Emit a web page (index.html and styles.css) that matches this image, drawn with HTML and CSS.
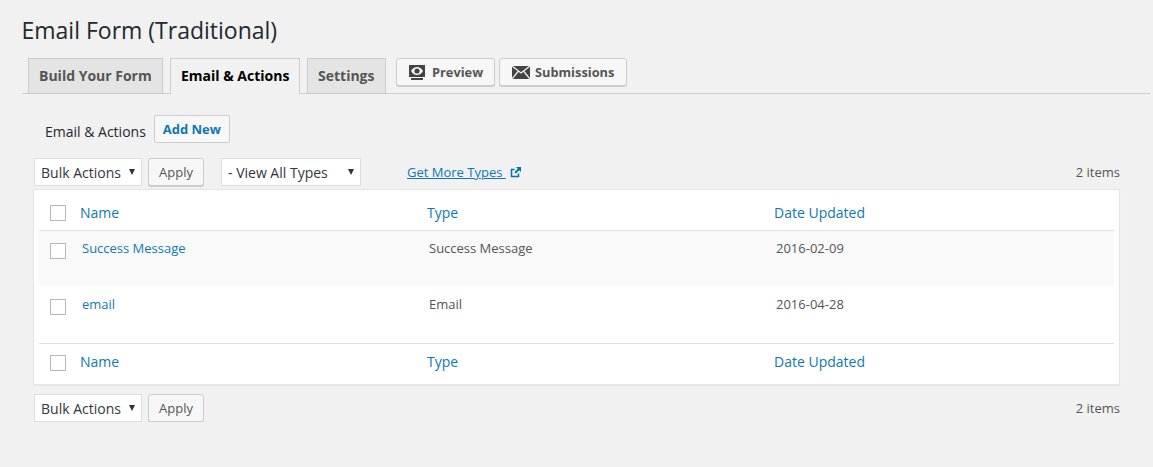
FILE: index.html
```html
<!DOCTYPE html>
<html lang="en">
<head>
  <meta charset="UTF-8" />
  <meta name="viewport" content="width=device-width, initial-scale=1.0"/>
  <title>Email Form (Traditional)</title>
  <link rel="stylesheet" href="styles.css">
</head>
<body>
  <h1>Email Form (Traditional)</h1>

  <div class="tabs">
    <a class="tab tab-build" href="#">Build Your Form</a>
    <a class="tab tab-active" href="#">Email &amp; Actions</a>
    <a class="tab tab-settings" href="#">Settings</a>
    <a class="tab-button btn-preview" href="#">
      <svg width="18" height="15" viewBox="0 0 18 15">
        <path fill="#444" d="M1 0h16v12H1z"/>
        <path fill="#444" d="M3 13h12v2H3z"/>
        <path fill="#fff" d="M3 6c2-3 4-4 6-4s4 1 6 4c-2 3-4 4-6 4s-4-1-6-4z"/>
        <circle cx="9" cy="6" r="2.6" fill="#444"/>
      </svg>
      Preview
    </a>
    <a class="tab-button btn-submissions" href="#">
      <svg width="18" height="13" viewBox="0 0 18 13">
        <path fill="#444" d="M0 0h18v13H0z"/>
        <path fill="none" stroke="#f3f3f3" stroke-width="1.3" d="M0 0l9 7 9-7M0 13l6.500-8M18 13l-6.500-8"/>
      </svg>
      Submissions
    </a>
  </div>

  <div class="subhead">
    <span>Email &amp; Actions</span>
    <a class="add-new" href="#">Add New</a>
  </div>

  <div class="toolbar toolbar-top">
    <div class="select select-bulk">Bulk Actions<i class="arrow"></i></div>
    <button class="apply">Apply</button>
    <div class="select select-types">- View All Types<i class="arrow"></i></div>
    <a class="more-types" href="#">Get More Types&nbsp;
      <svg width="11" height="11" viewBox="0 0 11 11">
        <path fill="none" stroke="#0073aa" stroke-width="1.500" d="M8.500 6.500v3h-7v-7h3"/>
        <path fill="#0073aa" d="M6 0h5v5L9.200 3.200 5.800 6.600 4.400 5.200 7.800 1.800z"/>
      </svg>
    </a>
    <span class="count">2 items</span>
  </div>

  <div class="card">
    <table>
      <thead>
        <tr>
          <th class="col-check"><span class="check"></span></th>
          <th class="col-name"><a href="#">Name</a></th>
          <th class="col-type"><a href="#">Type</a></th>
          <th><a href="#">Date Updated</a></th>
        </tr>
      </thead>
      <tbody>
        <tr class="alt">
          <td class="col-check"><span class="check"></span></td>
          <td><a href="#">Success Message</a></td>
          <td>Success Message</td>
          <td>2016-02-09</td>
        </tr>
        <tr>
          <td class="col-check"><span class="check"></span></td>
          <td><a href="#">email</a></td>
          <td>Email</td>
          <td>2016-04-28</td>
        </tr>
      </tbody>
      <tfoot>
        <tr>
          <th class="col-check"><span class="check"></span></th>
          <th><a href="#">Name</a></th>
          <th><a href="#">Type</a></th>
          <th><a href="#">Date Updated</a></th>
        </tr>
      </tfoot>
    </table>
  </div>

  <div class="toolbar toolbar-bottom">
    <div class="select select-bulk">Bulk Actions<i class="arrow"></i></div>
    <button class="apply">Apply</button>
    <span class="count">2 items</span>
  </div>
</body>
</html>
```

FILE: styles.css
```css
* {
  box-sizing: border-box;
}
body {
  margin: 0;
  padding: 0 33px 0 22px;
  background: #f1f1f1;
  color: #555;
  font-family: 'Open Sans', sans-serif;
  font-size: 13px;
}
a {
  color: #0f79b0;
  text-decoration: none;
}
h1 {
  margin: 0 0 0 -0.5px;
  padding-top: 15px;
  height: 58px;
  color: #23282d;
  font-size: 23px;
  font-weight: 400;
  line-height: 31px;
}
.tabs {
  display: flex;
  align-items: flex-start;
  height: 36px;
  margin-right: -30px;
  padding-left: 6px;
  border-bottom: 1px solid #ccc;
}
.tab {
  height: 35px;
  padding: 0 10px;
  border: 1px solid #ccc;
  border-bottom: none;
  background: #e4e4e4;
  color: #555;
  font-size: 14px;
  font-weight: 700;
  line-height: 33px;
  white-space: nowrap;
}
.tab-build {
  width: 135px;
}
.tab-active {
  width: 130px;
  height: 36px;
  margin-left: 7px;
  background: #f1f1f1;
  color: #000;
}
.tab-settings {
  width: 79px;
  margin-left: 7px;
}
.tab-button {
  display: flex;
  align-items: center;
  gap: 6px;
  height: 28px;
  border: 1px solid #ccc;
  border-radius: 3px;
  background: #f7f7f7;
  box-shadow: 0 1px 0 #ccc;
  color: #555;
  font-size: 12.800px;
  font-weight: 700;
}
.btn-preview {
  width: 99px;
  margin-left: 10px;
  padding-left: 11px;
}
.btn-submissions {
  width: 128px;
  margin-left: 4px;
  padding-left: 12px;
  gap: 5px;
}
.subhead {
  display: flex;
  align-items: center;
  gap: 8px;
  height: 28px;
  margin-top: 21px;
  padding-left: 23px;
  color: #23282d;
  font-size: 14px;
}
.subhead span {
  padding-top: 4px;
}
.add-new {
  display: block;
  width: 76px;
  height: 28px;
  border: 1px solid #ccc;
  border-radius: 2px;
  background: #f7f7f7;
  font-size: 13px;
  font-weight: 700;
  line-height: 26px;
  text-align: center;
}
.toolbar {
  display: flex;
  align-items: center;
  height: 28px;
  margin-left: 12px;
}
.toolbar-top {
  margin-top: 15px;
}
.toolbar-bottom {
  margin-top: 9px;
}
.select {
  position: relative;
  height: 28px;
  padding-left: 6px;
  border: 1px solid #ddd;
  background: #fff;
  color: #32373c;
  font-size: 14px;
  line-height: 27px;
}
.select-bulk {
  width: 108px;
}
.select-types {
  width: 140px;
  margin-left: 17px;
}
.arrow {
  position: absolute;
  top: 10px;
  right: 6px;
  border-top: 6px solid #333;
  border-left: 3px solid transparent;
  border-right: 3px solid transparent;
}
.apply {
  width: 56px;
  height: 28px;
  margin-left: 6px;
  padding: 0;
  border: 1px solid #ccc;
  border-radius: 3px;
  background: #f7f7f7;
  box-shadow: 0 1px 0 #ccc;
  color: #555;
  font-family: inherit;
  font-size: 13px;
}
.more-types {
  display: flex;
  align-items: center;
  gap: 4px;
  margin-left: 46px;
  text-decoration: underline;
}
.count {
  margin-left: auto;
  color: #555;
}
.card {
  margin: 3px 0 0 11px;
  padding: 0 5px;
  border: 1px solid #e5e5e5;
  background: #fff;
  box-shadow: 0 1px 1px rgba(0, 0, 0, 0.04);
}
table {
  width: 100%;
  border-collapse: collapse;
  table-layout: fixed;
}
th, td {
  padding: 0;
  text-align: left;
  vertical-align: top;
}
th {
  font-size: 14px;
  font-weight: 400;
  line-height: 22px;
}
thead th {
  height: 40px;
  padding-top: 12px;
  border-bottom: 1px solid #e1e1e1;
}
tfoot th {
  height: 41px;
  padding-top: 7px;
  border-top: 1px solid #e1e1e1;
}
td {
  height: 57px;
  padding: 9px 0 0 2px;
  line-height: 18px;
}
td.col-check {
  padding: 10px 0 0 0;
}
.alt td {
  height: 56px;
  padding-top: 8px;
}
.alt td.col-check {
  padding-top: 9px;
}
.col-check {
  width: 41px;
}
tfoot .check {
  margin-top: 4px;
}
.col-name, .col-type {
  width: 347px;
}
.alt {
  background: #f9f9f9;
}
.check {
  display: block;
  width: 16px;
  height: 16px;
  margin: 3px 0 0 11px;
  border: 1px solid #b4b9be;
  background: #fff;
}
```
